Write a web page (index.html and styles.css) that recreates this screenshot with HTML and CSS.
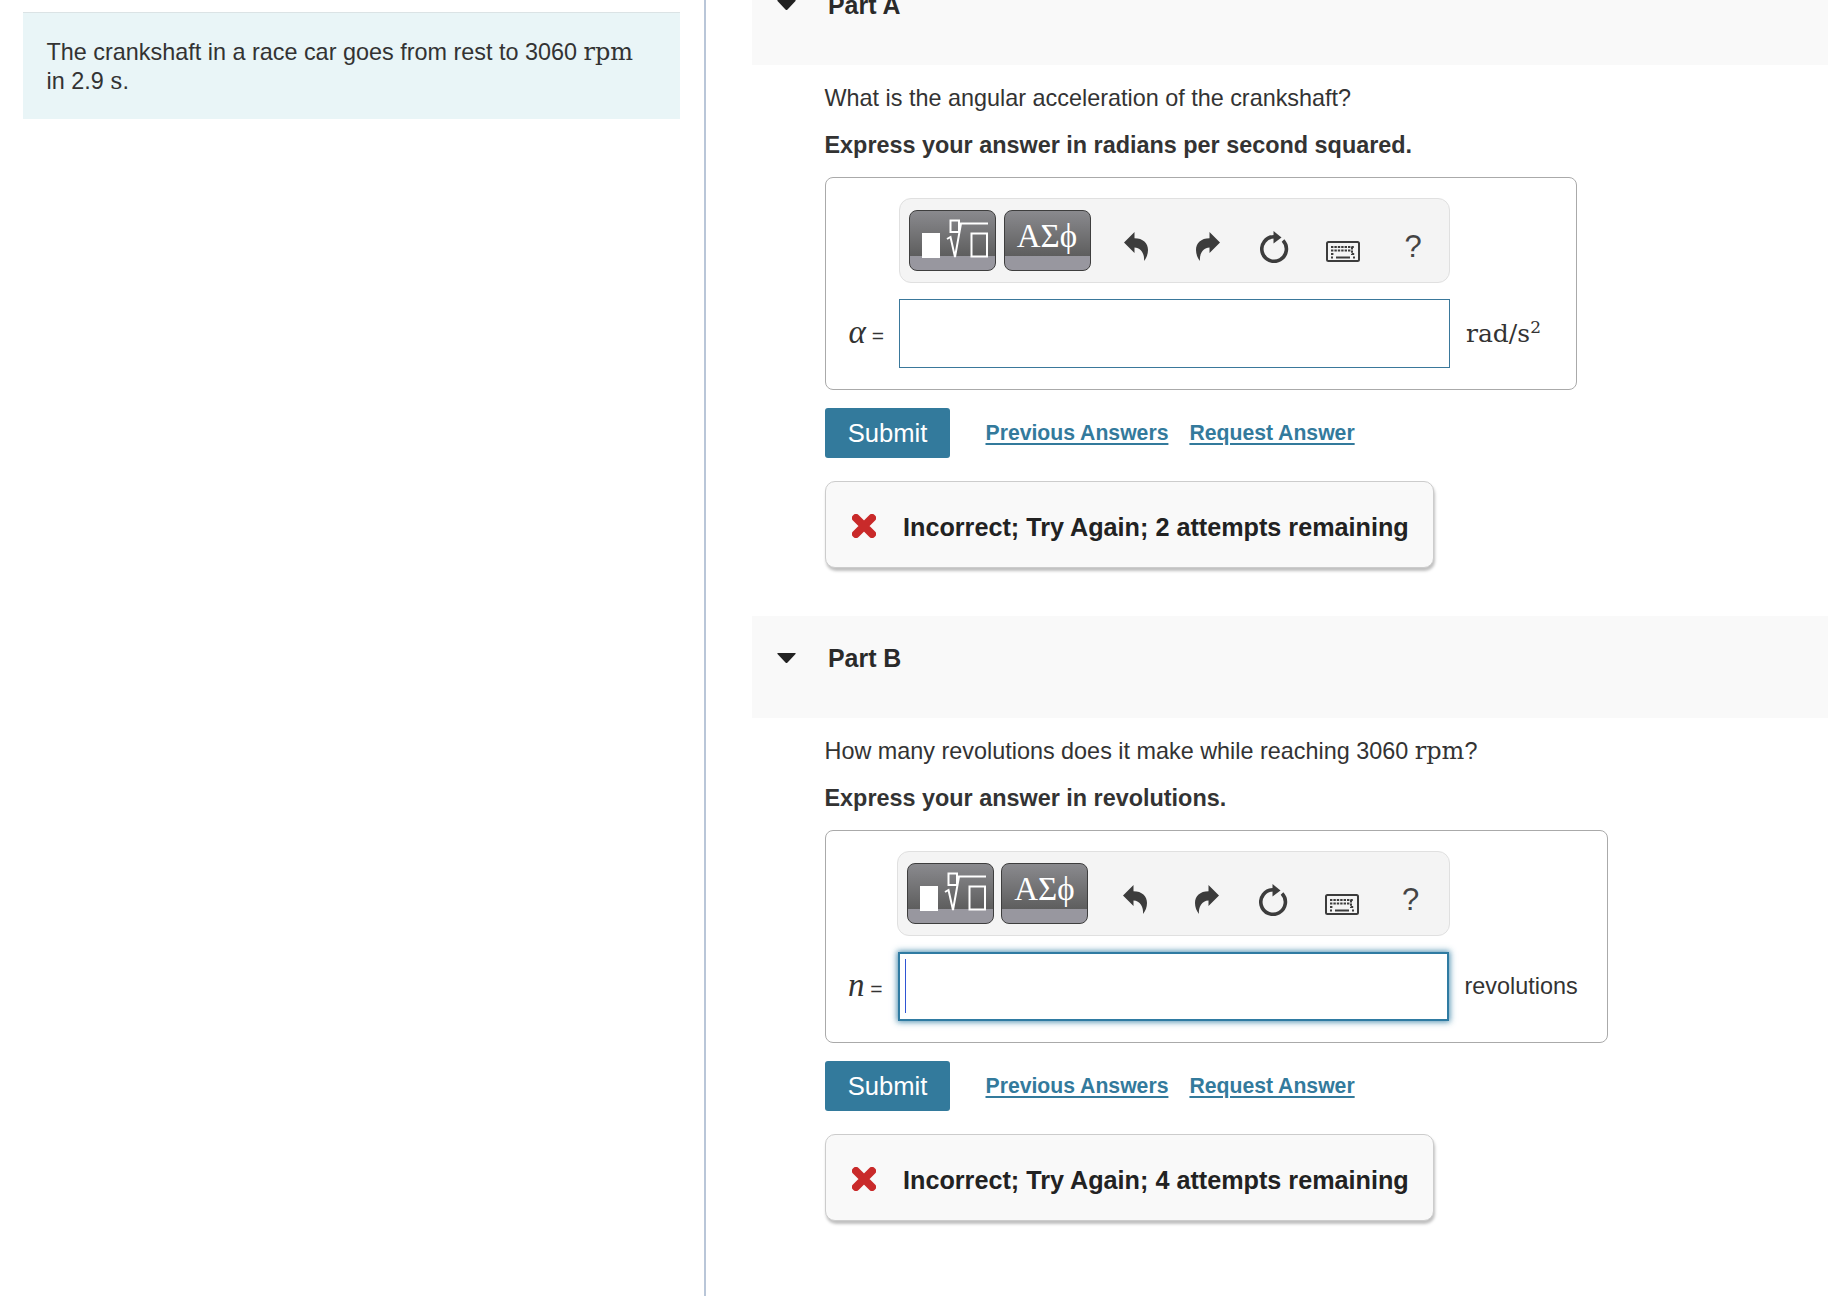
FILE: index.html
```html
<!DOCTYPE html>
<html lang="en">
<head>
<meta charset="utf-8">
<title>Crankshaft problem</title>
<link rel="stylesheet" href="styles.css">
</head>
<body>
<svg class="defs" width="0" height="0" aria-hidden="true">
  <defs>
    <symbol id="i-undo" viewBox="0 0 24 29"><path d="M0 10.5 10.5 0V6.2C19 6.2 24 11 24 18 24 22 22.5 26 20 29 20.8 22 17 15.5 10.5 15.5V21Z"/></symbol>
    <symbol id="i-reload" viewBox="0 0 29 32"><path class="ring" d="M14 5.7A12.3 12.3 0 1 0 23 9.5"/><path d="M13.5 0 21.5 6.5 13.5 12.5Z"/></symbol>
    <symbol id="i-kb" viewBox="0 0 34 21"><rect class="kb-frame" x="1" y="1" width="32" height="19" rx="1.5"/><path class="kb-keys" d="M5 6H28M5 9.5H25M5 13H8M26 6V13H29M5 16.5H7"/><path class="kb-bar" d="M10 16.500H24M27 16.500H29"/></symbol>
    <symbol id="i-x" viewBox="0 0 24 24"><path class="x-cross" d="M4 4 20 20M20 4 4 20"/></symbol>
    <symbol id="i-tpl" viewBox="0 0 87 61"><rect class="tpl-fill" x="13" y="23" width="18" height="25"/><path class="tpl-line" d="M41.500 10.500H50V22H41.500ZM62.500 23.500H78V46.500H62.500ZM38 29 41.500 27 46 47 52 13.500H79"/></symbol>
    <symbol id="i-arrow" viewBox="0 0 19 10"><path d="M1 0H18Q19.300 0 18.500 1L10.500 9.500Q9.500 10.500 8.500 9.500L.5 1Q-.3 0 1 0Z"/></symbol>
  </defs>
</svg>
<div class="page">
  <aside class="left">
    <div class="intro">
      <p>The crankshaft in a race car goes from rest to 3060 <span class="unit">rpm</span> in 2.9 <span class="unit">s</span>.</p>
    </div>
  </aside>
  <main class="right">
    <section class="part">
      <header class="part-head"><svg class="arrow"><use href="#i-arrow"/></svg><h2>Part A</h2></header>
      <div class="part-body">
        <p class="question">What is the angular acceleration of the crankshaft?</p>
        <p class="instruction">Express your answer in radians per second squared.</p>
        <div class="answer answer-a">
          <div class="toolbar">
            <button class="tool"><svg class="tpl"><use href="#i-tpl"/></svg></button>
            <button class="tool tool-greek">ΑΣϕ</button>
            <svg class="ic ic-undo"><use href="#i-undo"/></svg>
            <svg class="ic ic-redo"><use href="#i-undo"/></svg>
            <svg class="ic ic-reload"><use href="#i-reload"/></svg>
            <svg class="ic ic-kb"><use href="#i-kb"/></svg>
            <span class="ic-help">?</span>
          </div>
          <label class="var"><i>α</i> =</label>
          <div class="input"></div>
          <div class="suffix suffix-math">rad/s<sup>2</sup></div>
        </div>
        <div class="actions">
          <button class="submit">Submit</button>
          <a class="link link-prev" href="#">Previous Answers</a>
          <a class="link" href="#">Request Answer</a>
        </div>
        <div class="feedback"><svg class="x"><use href="#i-x"/></svg><span>Incorrect; Try Again; 2 attempts remaining</span></div>
      </div>
    </section>
    <section class="part part-b">
      <header class="part-head"><svg class="arrow"><use href="#i-arrow"/></svg><h2>Part B</h2></header>
      <div class="part-body">
        <p class="question">How many revolutions does it make while reaching 3060 <span class="unit">rpm</span>?</p>
        <p class="instruction">Express your answer in revolutions.</p>
        <div class="answer answer-b">
          <div class="toolbar">
            <button class="tool"><svg class="tpl"><use href="#i-tpl"/></svg></button>
            <button class="tool tool-greek">ΑΣϕ</button>
            <svg class="ic ic-undo"><use href="#i-undo"/></svg>
            <svg class="ic ic-redo"><use href="#i-undo"/></svg>
            <svg class="ic ic-reload"><use href="#i-reload"/></svg>
            <svg class="ic ic-kb"><use href="#i-kb"/></svg>
            <span class="ic-help">?</span>
          </div>
          <label class="var"><i>n</i> =</label>
          <div class="input input-focus"><span class="caret"></span></div>
          <div class="suffix">revolutions</div>
        </div>
        <div class="actions">
          <button class="submit">Submit</button>
          <a class="link link-prev" href="#">Previous Answers</a>
          <a class="link" href="#">Request Answer</a>
        </div>
        <div class="feedback"><svg class="x"><use href="#i-x"/></svg><span>Incorrect; Try Again; 4 attempts remaining</span></div>
      </div>
    </section>
  </main>
</div>
</body>
</html>
```
FILE: styles.css
```css
* { box-sizing: border-box; }
html, body { margin: 0; padding: 0; }
body {
  width: 1828px;
  height: 1296px;
  overflow: hidden;
  background: #fff;
  color: #333;
  font-family: "Liberation Sans", Arial, sans-serif;
  font-size: 23.4px;
  line-height: 29px;
}
p { margin: 0; }
.defs { position: absolute; }
.page { display: flex; height: 1296px; }

.left {
  flex: 0 0 705.500px;
  border-right: 2px solid #b9c6d8;
  padding: 12px 23.500px 0 23px;
}
.intro {
  background: #e9f5f7;
  border-top: 1px solid #dbe3e5;
  height: 107px;
  padding: 25px 30px 0 23.500px;
}
.unit {
  font-family: "DejaVu Serif", serif;
  font-size: 24px;
  line-height: 0;
}

.right { flex: 1; padding-left: 46.500px; margin-top: -37px; }
.part-head {
  display: flex;
  align-items: center;
  gap: 32px;
  height: 102px;
  padding: 0 0 18px 25px;
  background: #f9f9f9;
}
.part-head h2 { margin: 0; font-size: 24.900px; font-weight: bold; line-height: 29px; color: #2a2a2a; }
.arrow { width: 19px; height: 10px; fill: #222; }
.part-body { padding-left: 73px; }
.part-b { margin-top: 48px; }
.question { padding-top: 18.500px; margin-left: -.5px; }
.instruction { margin-top: 18px; font-weight: bold; margin-left: -.5px; }

.answer {
  display: grid;
  width: fit-content;
  margin-top: 17.500px;
  height: 213px;
  padding: 20px 0 0;
  border: 1px solid #aaa;
  border-radius: 8px;
  grid-template-rows: 85px 69px;
  row-gap: 16px;
}
.answer-a { grid-template-columns: 73px 551px 126px; }
.answer-b { grid-template-columns: 71.500px 551px 158px; }
.answer-b .toolbar { margin: 0 -1px; }
.answer-b .ic-undo { margin-left: 34.500px; }
.answer-b .ic-help { margin-left: 43.500px; }
.toolbar {
  grid-column: 2;
  display: flex;
  align-items: center;
  padding-left: 9px;
  background: #f4f4f4;
  border: 1px solid #e0e0e0;
  border-radius: 12px;
}
.tool {
  flex: none;
  width: 87px;
  height: 61px;
  padding: 0;
  margin: 0;
  border: 1px solid #3e3e3e;
  border-radius: 8px;
  background: linear-gradient(#8a8a8e, #5e5e5e 76%, #98979f 76%);
  display: block;
}
.tool-greek {
  margin-left: 7.500px;
  padding-bottom: 10px;
  color: #fff;
  font-family: "Liberation Serif", serif;
  font-size: 33px;
  line-height: 40px;
}
.tpl { display: block; width: 87px; height: 61px; margin: -1px; }
.tpl-fill { fill: #fff; }
.tpl-line { fill: none; stroke: #fff; stroke-width: 2px; }

.ic { flex: none; fill: #3c3c3c; }
.ic-undo, .ic-redo { width: 24px; height: 29px; margin-top: 12px; }
.ic-undo { margin-left: 33px; }
.ic-redo { margin-left: 48px; transform: scaleX(-1); }
.ic-reload { width: 29px; height: 32px; margin-left: 40px; margin-top: 13px; }
.ic-kb { width: 34px; height: 21px; margin-left: 37px; margin-top: 21px; }
.ring { fill: none; stroke: #3c3c3c; stroke-width: 3.600px; }
.kb-frame { fill: #f4f4f4; stroke: #3c3c3c; stroke-width: 2px; }
.kb-keys { fill: none; stroke: #3c3c3c; stroke-width: 2px; stroke-dasharray: 2.400 1; }
.kb-bar { fill: none; stroke: #3c3c3c; stroke-width: 2px; }
.ic-help {
  margin-left: 45px;
  margin-top: 12px;
  color: #444;
  font-size: 31px;
  line-height: 34px;
}

.var {
  grid-column: 1;
  grid-row: 2;
  align-self: center;
  text-align: right;
  padding: 3px 15px 0 0;
  font-size: 21px;
  font-family: "Liberation Sans", sans-serif;
}
.var i { font-family: "Liberation Serif", serif; font-size: 33px; line-height: 0; }
.input {
  grid-column: 2;
  grid-row: 2;
  border: 1px solid #3a789b;
  background: #fff;
  padding: 5px 5px;
}
.input-focus {
  border: 2px solid #2f7ba2;
  box-shadow: 0 0 6px 1px rgba(47, 123, 162, .85);
}
.caret { display: block; width: 1px; height: 54px; background: #2f55d4; }
.suffix {
  grid-column: 3;
  grid-row: 2;
  align-self: center;
  padding-left: 16px;
}
.suffix-math {
  font-family: "DejaVu Serif", serif;
  font-size: 25px;
}
.suffix-math sup { font-size: 17px; line-height: 0; }

.actions { display: flex; align-items: center; margin-top: 18px; height: 50px; }
.submit {
  width: 125px;
  height: 50px;
  padding: 0;
  border: 0;
  border-radius: 3px;
  background: #337a9c;
  color: #fff;
  font-family: "Liberation Sans", sans-serif;
  font-size: 25.600px;
}
.link {
  margin-top: -2px;
  color: #337a9c;
  font-weight: bold;
  font-size: 21.200px;
  text-decoration-thickness: 2px;
  text-underline-offset: 3px;
}
.link-prev { margin-left: 35.500px; margin-right: 21px; }

.feedback {
  display: flex;
  align-items: center;
  gap: 27px;
  width: 609px;
  height: 87px;
  margin-top: 23px;
  padding: 6px 0 0 26px;
  background: #f9f9f9;
  border: 1px solid #ccc;
  border-radius: 10px;
  box-shadow: 1px 3px 3px rgba(0, 0, 0, .25);
  color: #222;
  font-weight: bold;
  font-size: 25.200px;
}
.x { flex: none; width: 24px; height: 24px; margin-top: -3px; }
.x-cross { fill: none; stroke: #c92a2a; stroke-width: 8px; stroke-linecap: round; }
```
